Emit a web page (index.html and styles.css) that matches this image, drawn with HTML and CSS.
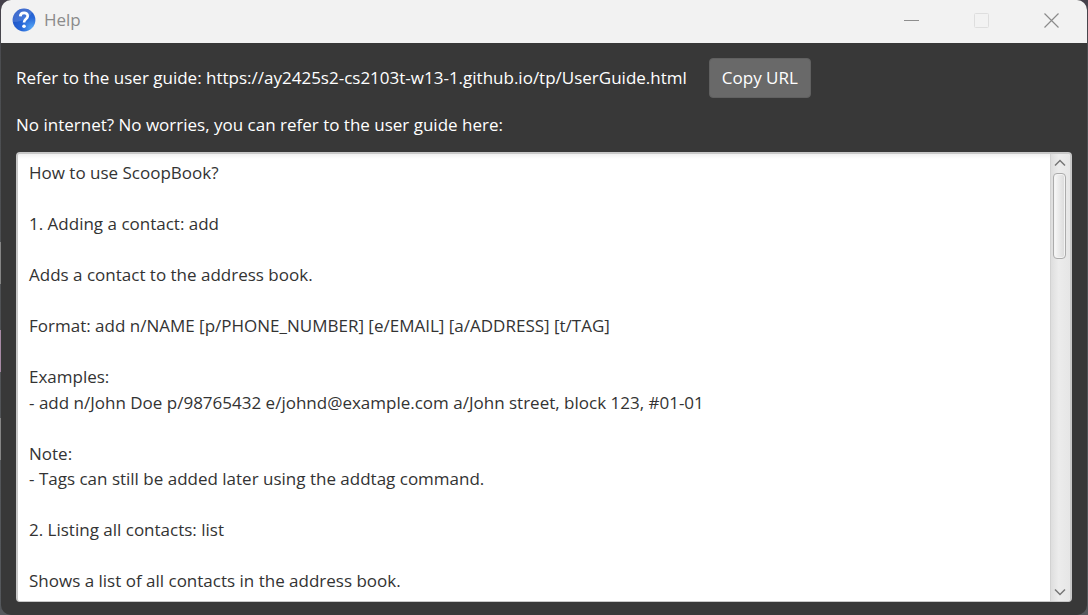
FILE: index.html
```html
<!DOCTYPE html>
<html lang="en">
<head>
<meta charset="utf-8">
<title>Help</title>
<link rel="stylesheet" href="styles.css">
</head>
<body>
<div class="window">
  <header class="titlebar">
    <svg class="app-icon" viewBox="0 0 24 24" aria-hidden="true">
      <defs>
        <radialGradient id="ball" cx="0.85" cy="0.85" r="0.9">
          <stop offset="0" stop-color="#55a5f5"/>
          <stop offset="0.5" stop-color="#2868d8"/>
          <stop offset="1" stop-color="#2156c8"/>
        </radialGradient>
      </defs>
      <circle cx="12" cy="12" r="11.4" fill="url(#ball)"/>
      <path d="M1 14A11.2 11.2 0 0 1 20 4Q17 13 1 14Z" fill="#fff" opacity="0.14"/>
      <path d="M8.3 8.4C8.4 3.6 15.8 3.7 15.7 8.1C15.6 11 12 11.2 12 14.6" fill="none" stroke="#fff" stroke-width="2.7"/>
      <circle cx="12" cy="18.2" r="1.8" fill="#fff"/>
    </svg>
    <h1 class="title">Help</h1>
    <div class="window-controls">
      <button class="control" aria-label="Minimize"><svg viewBox="0 0 16 16"><path d="M0 8.5H15" stroke="#8e8e8e"/></svg></button>
      <button class="control" aria-label="Maximize" disabled><svg viewBox="0 0 16 16"><rect x="0.5" y="1.5" width="14" height="14" rx="1" fill="none" stroke="#dedede"/></svg></button>
      <button class="control" aria-label="Close"><svg viewBox="0 0 16 16"><path d="M0.5 1.5L14.5 15.5M14.5 1.5L0.5 15.5" stroke="#8b8b8b" stroke-width="1.2"/></svg></button>
    </div>
  </header>
  <main class="content">
    <div class="guide-row">
      <span>Refer to the user guide: https://ay2425s2-cs2103t-w13-1.github.io/tp/UserGuide.html</span>
      <button class="copy">Copy URL</button>
    </div>
    <label class="caption" for="guide">No internet? No worries, you can refer to the user guide here:</label>
    <div class="guide-box">
      <textarea class="guide" id="guide" readonly>How to use ScoopBook?

1. Adding a contact: add

Adds a contact to the address book.

Format: add n/NAME [p/PHONE_NUMBER] [e/EMAIL] [a/ADDRESS] [t/TAG]

Examples:
- add n/John Doe p/98765432 e/johnd@example.com a/John street, block 123, #01-01

Note:
- Tags can still be added later using the addtag command.

2. Listing all contacts: list

Shows a list of all contacts in the address book.</textarea>
      <div class="scrollbar">
        <button class="arrow" aria-label="Scroll up"><svg viewBox="0 0 12 8"><path d="M1 6.5L6 1.5L11 6.5"/></svg></button>
        <div class="track"><div class="thumb"></div></div>
        <button class="arrow" aria-label="Scroll down"><svg viewBox="0 0 12 8"><path d="M1 1.5L6 6.5L11 1.5"/></svg></button>
      </div>
    </div>
  </main>
</div>
<div class="backdrop-edge"><i class="strip"></i><i class="strip pink"></i><i class="strip"></i></div>
</body>
</html>
```
FILE: styles.css
```css
* { box-sizing: border-box; }
body {
  margin: 0;
  background: linear-gradient(#45404a, #4b4d50 10%, #55585c);
  font: 17px/1.5 "Open Sans", "Noto Sans", sans-serif;
}
button { font: inherit; border: 0; padding: 0; }
.window {
  display: flex;
  flex-direction: column;
  height: 100vh;
  margin: 0 1px;
  border-radius: 10px;
  overflow: hidden;
  background: #383838;
}
.titlebar {
  display: flex;
  align-items: center;
  flex: none;
  height: 43px;
  padding: 0 0 3px 11px;
  background: #f2f2f2;
}
.app-icon { width: 24px; height: 24px; }
.title { margin: 0 0 0 8px; font-size: 17px; font-weight: 400; color: #8b8b8b; }
.window-controls { display: flex; margin-left: auto; }
.control {
  display: grid;
  place-items: center;
  width: 70px;
  height: 40px;
  background: none;
}
.control svg { width: 16px; height: 16px; }
.content {
  display: flex;
  flex-direction: column;
  flex: 1;
  min-height: 0;
  padding: 15px 15px 13px;
  color: #fff;
}
.guide-row { display: flex; align-items: center; gap: 22px; }
.copy {
  height: 40px;
  padding: 0 12px;
  border: 1px solid #606060;
  border-radius: 4px;
  background: #696969;
  color: #fff;
}
.caption { margin: 14px 0; line-height: 26px; }
.guide-box {
  display: flex;
  flex: 1;
  min-height: 0;
  border: 2px solid #c8c8c8;
  border-bottom-width: 1px;
  border-radius: 4px;
  overflow: hidden;
  background: #fff;
}
.guide {
  flex: 1;
  min-width: 0;
  padding: 6px 11px;
  border: 0;
  outline: 0;
  resize: none;
  overflow: hidden;
  font: inherit;
  color: #333;
  background: linear-gradient(#f1f1f1, #fff 5px);
}
.scrollbar {
  display: flex;
  flex-direction: column;
  width: 20px;
  padding-right: 2px;
  border-left: 1px solid #d2d2d2;
  background: linear-gradient(90deg, #dedede, #ececec 40%, #e6e6e6);
}
.arrow { display: grid; place-items: center; height: 18px; background: none; }
.arrow svg { width: 12px; height: 8px; fill: none; stroke: #777; stroke-width: 1.5; }
.track { flex: 1; padding: 1px 2px 0; }
.thumb {
  height: 21%;
  min-height: 30px;
  border: 1px solid #ababab;
  border-radius: 4px;
  background: linear-gradient(90deg, #fafafa, #efefef 30%, #dadada);
  box-shadow: inset 0 0 0 1px #f3f3f3;
}
.backdrop-edge {
  position: absolute;
  left: 0;
  top: 242px;
  display: grid;
  gap: 46px;
}
.strip { width: 1px; height: 42px; background: #858585; }
.pink { background: #a78aa5; }
```
